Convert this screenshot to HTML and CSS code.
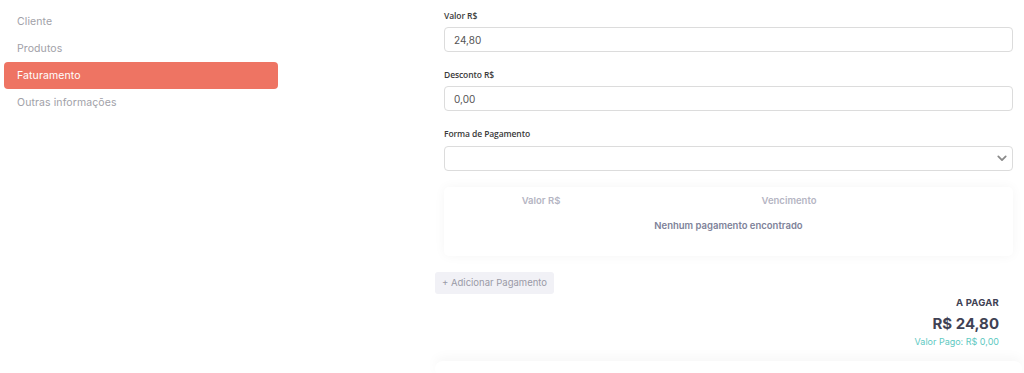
FILE: index.html
```html
<!DOCTYPE html>
<html lang="pt-BR">
<head>
<meta charset="utf-8">
<title>Faturamento</title>
<link rel="stylesheet" href="styles.css">
</head>
<body>
<div class="layout">
  <nav class="sidebar">
    <div class="nav-item">Cliente</div>
    <div class="nav-item">Produtos</div>
    <div class="nav-item active">Faturamento</div>
    <div class="nav-item">Outras informações</div>
  </nav>
  <main class="main">
    <div class="form">
      <div class="field">
        <label class="label">Valor R$</label>
        <div class="input">24,80</div>
      </div>
      <div class="field">
        <label class="label">Desconto R$</label>
        <div class="input">0,00</div>
      </div>
      <div class="field">
        <label class="label">Forma de Pagamento</label>
        <div class="input select">
          <svg class="chevron" width="10" height="7" viewBox="0 0 10 7"><path d="M1.3 1.4 L5 5.1 L8.7 1.4" fill="none" stroke="#8a8a8a" stroke-width="1.8" stroke-linecap="round" stroke-linejoin="round"/></svg>
        </div>
      </div>
      <div class="table-card">
        <div class="table-head">
          <span class="th th-valor">Valor R$</span>
          <span class="th th-venc">Vencimento</span>
        </div>
        <div class="empty">Nenhum pagamento encontrado</div>
      </div>
    </div>
    <div class="actions">
      <button class="add-btn">+ Adicionar Pagamento</button>
    </div>
    <div class="totals">
      <div class="to-pay-label">A PAGAR</div>
      <div class="to-pay">R$ 24,80</div>
      <div class="paid">Valor Pago: R$ 0,00</div>
    </div>
    <div class="next-card"></div>
  </main>
</div>
</body>
</html>
```

FILE: styles.css
```css
html, body {
  margin: 0;
  padding: 0;
  background: #ffffff;
}
body {
  font-family: "Inter", "Noto Sans", sans-serif;
  width: 1024px;
  height: 373px;
  overflow: hidden;
}
.layout {
  display: flex;
}
.sidebar {
  width: 274px;
  padding: 8px 0 0 4px;
  display: flex;
  flex-direction: column;
}
.nav-item {
  height: 27px;
  line-height: 27px;
  padding-left: 13px;
  font-size: 10.5px;
  color: #a1a1a8;
  border-radius: 4px;
  letter-spacing: 0.1px;
}
.nav-item.active {
  background: #ee7463;
  color: #ffffff;
}
.main {
  margin-left: 157px;
  width: 587px;
  display: flex;
  flex-direction: column;
}
.form {
  padding: 10px 9px 0 9px;
  display: flex;
  flex-direction: column;
}
.field {
  display: flex;
  flex-direction: column;
  margin-bottom: 17px;
}
.field:nth-child(3) {
  margin-bottom: 16px;
}
.label {
  font-family: "Open Sans", sans-serif;
  font-weight: 600;
  font-size: 8.5px;
  line-height: 12px;
  color: #3a3a3a;
  margin-bottom: 5px;
  letter-spacing: -0.1px;
}
.field:nth-child(3) .label {
  margin-bottom: 6px;
}
.input {
  height: 23px;
  border: 1px solid #dcdcdc;
  border-radius: 4px;
  padding-left: 9px;
  display: flex;
  align-items: center;
  font-size: 10px;
  color: #555555;
  box-sizing: content-box;
}
.select {
  justify-content: flex-end;
  padding-right: 5px;
}
.chevron {
  display: block;
}
.table-card {
  height: 69px;
  background: #ffffff;
  border-radius: 5px;
  box-shadow: 0 0 12px rgba(0, 0, 0, 0.045);
  display: flex;
  flex-direction: column;
}
.table-head {
  display: flex;
  height: 24px;
  align-items: center;
  padding-top: 1px;
}
.th {
  font-size: 9.5px;
  font-weight: 600;
  color: #b5b5c3;
  text-align: center;
}
.th-valor {
  width: 194px;
}
.th-venc {
  width: 302px;
}
.empty {
  text-align: center;
  font-size: 9.5px;
  font-weight: 600;
  color: #7e8299;
  line-height: 28px;
}
.actions {
  padding-top: 14px;
}
.add-btn {
  font-family: "Inter", "Noto Sans", sans-serif;
  height: 22px;
  padding: 0 7px;
  background: #f1f1f6;
  border: none;
  border-radius: 3px;
  font-size: 9.5px;
  color: #9a9aa6;
  cursor: pointer;
}
.totals {
  display: flex;
  flex-direction: column;
  align-items: flex-end;
  padding-right: 23px;
  padding-top: 2px;
}
.to-pay-label {
  font-size: 9.5px;
  font-weight: 700;
  color: #3f4254;
  line-height: 14px;
  letter-spacing: 0.2px;
}
.to-pay {
  font-size: 15px;
  font-weight: 700;
  color: #3f4254;
  line-height: 20px;
  margin-top: 4px;
}
.paid {
  font-size: 9px;
  color: #5ec9c2;
  line-height: 14px;
  margin-top: 1px;
}
.next-card {
  margin-top: 12px;
  height: 16px;
  border-radius: 8px;
  box-shadow: 0 -4px 12px rgba(0, 0, 0, 0.035);
}
```
